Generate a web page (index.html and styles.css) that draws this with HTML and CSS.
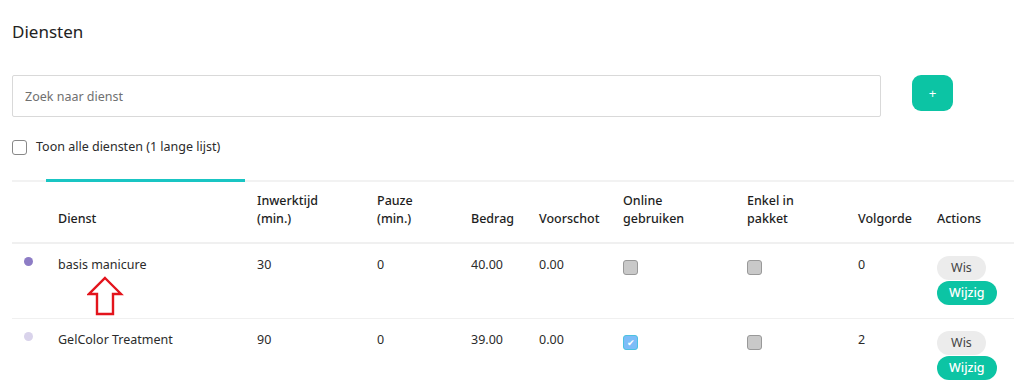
FILE: index.html
```
<!DOCTYPE html>
<html lang="nl">
<head>
    <meta charset="UTF-8">
    <title>Diensten</title>
    <link rel="stylesheet" href="styles.css">
</head>
<body>
    <div class="page">
        <h1>Diensten</h1>
        <div class="search-row">
            <input type="text" class="search" placeholder="Zoek naar dienst">
            <button class="add-btn">+</button>
        </div>
        <label class="show-all">
            <span class="box"></span>
            Toon alle diensten (1 lange lijst)
        </label>
        <table class="services">
            <colgroup>
                <col style="width: 34px">
                <col style="width: 199px">
                <col style="width: 120px">
                <col style="width: 94px">
                <col style="width: 68px">
                <col style="width: 84px">
                <col style="width: 124px">
                <col style="width: 111px">
                <col style="width: 79px">
                <col style="width: 89px">
            </colgroup>
            <thead>
                <tr>
                    <th></th>
                    <th class="sorted">Dienst</th>
                    <th>Inwerktijd<br>(min.)</th>
                    <th>Pauze<br>(min.)</th>
                    <th>Bedrag</th>
                    <th>Voorschot</th>
                    <th>Online<br>gebruiken</th>
                    <th>Enkel in<br>pakket</th>
                    <th>Volgorde</th>
                    <th>Actions</th>
                </tr>
            </thead>
            <tbody>
                <tr>
                    <td><span class="dot" style="background: #8d7cc5"></span></td>
                    <td class="name">basis manicure
                        <svg class="arrow" width="38" height="42" viewBox="0 0 38 42">
                            <path d="M18 2 L34 18 L26 18 L26 38 L10 38 L10 18 L2 18 Z" fill="none" stroke="#e3141c" stroke-width="2.4" stroke-linejoin="miter"/>
                        </svg>
                    </td>
                    <td>30</td>
                    <td>0</td>
                    <td>40.00</td>
                    <td>0.00</td>
                    <td><span class="check"></span></td>
                    <td><span class="check"></span></td>
                    <td>0</td>
                    <td class="actions"><button class="wis">Wis</button><button class="wijzig">Wijzig</button></td>
                </tr>
                <tr>
                    <td><span class="dot" style="background: #d9d3eb"></span></td>
                    <td class="name">GelColor Treatment</td>
                    <td>90</td>
                    <td>0</td>
                    <td>39.00</td>
                    <td>0.00</td>
                    <td><span class="check on">&#10004;</span></td>
                    <td><span class="check"></span></td>
                    <td>2</td>
                    <td class="actions"><button class="wis">Wis</button><button class="wijzig">Wijzig</button></td>
                </tr>
            </tbody>
        </table>
    </div>
</body>
</html>
```

FILE: styles.css
```
body {
    margin: 0;
    font-family: "Noto Sans", sans-serif;
    font-size: 12.5px;
    color: #2b2b2b;
    background: #fff;
}
.page {
    padding: 0 0 0 12px;
    border-left: 2px solid #f3f3f3;
    margin-left: -2px;
}
h1 {
    margin: 0;
    padding-top: 21px;
    font-size: 17px;
    font-weight: 400;
    line-height: 22px;
    color: #222;
}
.search-row {
    display: flex;
    align-items: flex-start;
    margin-top: 32px;
}
.search {
    width: 869px;
    height: 42px;
    box-sizing: border-box;
    border: 1px solid #d9d9d9;
    border-radius: 2px;
    padding: 0 12px;
    font-family: inherit;
    font-size: 12.5px;
    color: #333;
}
.search::placeholder {
    color: #707070;
}
.add-btn {
    margin-left: 31px;
    width: 41px;
    height: 36px;
    border: none;
    border-radius: 9px;
    background: #0cc4a4;
    color: #fff;
    font-size: 13px;
    padding: 0;
}
.show-all {
    display: flex;
    align-items: center;
    margin-top: 21px;
    line-height: 18px;
}
.box {
    width: 15px;
    height: 15px;
    box-sizing: border-box;
    border: 1px solid #888;
    border-radius: 3px;
    margin-right: 9px;
}
.services {
    margin-top: 23px;
    border-collapse: collapse;
    table-layout: fixed;
    width: 1002px;
}
.services th {
    text-align: left;
    vertical-align: bottom;
    font-weight: 500;
    line-height: 18px;
    padding: 10px 12px 14px;
    border-top: 2px solid #f2f2f2;
    border-bottom: 2px solid #f0f0f0;
    color: #1e1e1e;
}
.services th.sorted {
    border-top: 3px solid #19c5c3;
}
.services td {
    vertical-align: top;
    line-height: 20px;
    padding: 11px 12px 12px;
    border-bottom: 1px solid #f0f0f0;
}
.services tbody tr:last-child td {
    border-bottom: none;
}
.dot {
    display: block;
    width: 9px;
    height: 9px;
    border-radius: 50%;
    margin-top: 2px;
}
.name {
    position: relative;
}
.arrow {
    position: absolute;
    left: 41px;
    top: 32px;
}
.check {
    display: block;
    width: 15px;
    height: 15px;
    box-sizing: border-box;
    border: 1px solid #999;
    border-radius: 3px;
    background: #c9c9c9;
    margin-top: 5px;
    font-size: 9px;
    line-height: 13px;
    text-align: center;
    color: #fff;
}
.check.on {
    background: #7dbdf8;
    border-color: #4cc2e0;
}
.services td.actions {
    padding-top: 12px;
    padding-bottom: 13px;
}
.actions button {
    display: block;
    height: 24px;
    border: none;
    border-radius: 12px;
    font-family: inherit;
    font-size: 12.5px;
    padding: 0 12px;
}
.actions .wis {
    background: #ececec;
    color: #444;
    padding: 0 14px;
}
.wijzig {
    background: #0cc4a4;
    color: #fff;
    font-weight: 500;
    margin-top: 1px;
}
```
